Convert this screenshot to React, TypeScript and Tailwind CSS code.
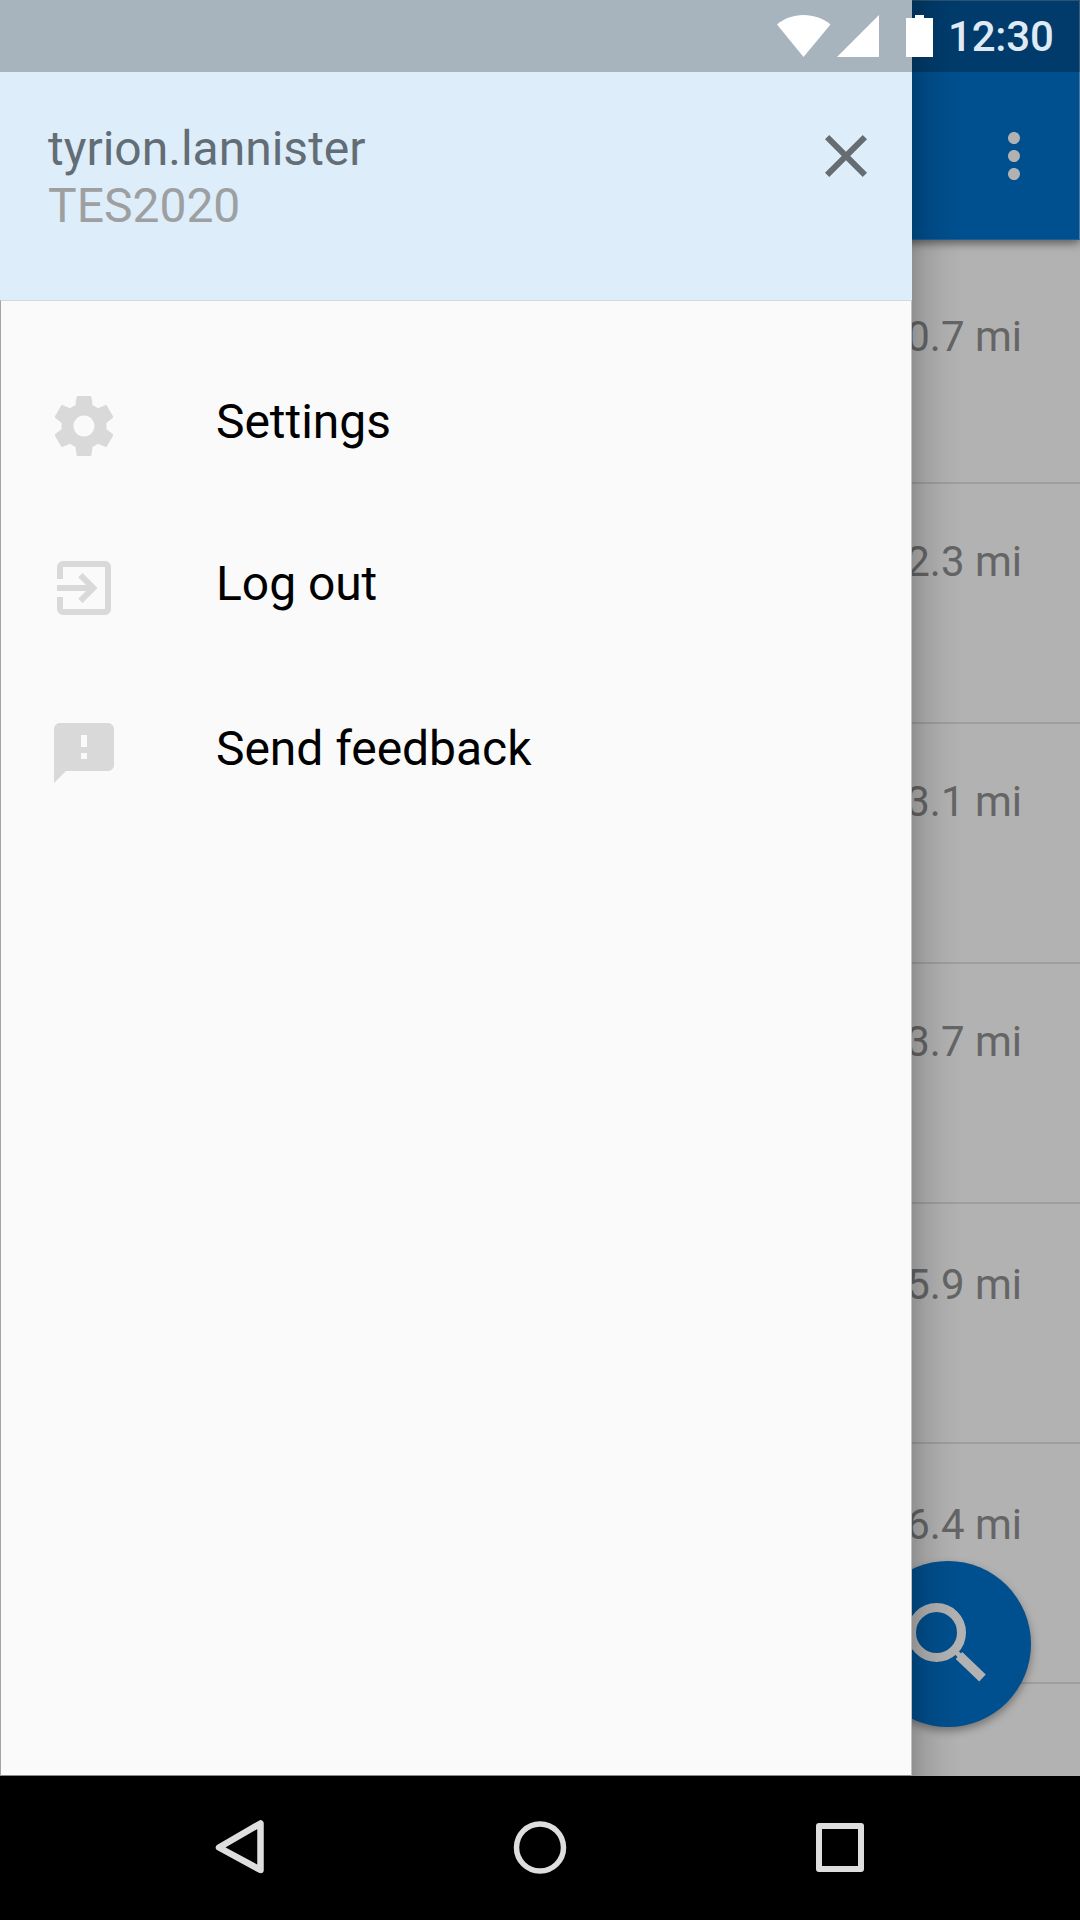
import type { ReactNode } from 'react';
import { MdClose, MdExitToApp, MdFeedback, MdMoreVert } from 'react-icons/md';

interface Place {
  distance: string;
  rowClass: string;
}

// Row heights include the 2px divider
const PLACES: Place[] = [
  { distance: '0.7 mi', rowClass: 'h-[244px] pt-[72px]' },
  { distance: '2.3 mi', rowClass: 'h-[240px] pt-[53px]' },
  { distance: '3.1 mi', rowClass: 'h-[240px] pt-[53px]' },
  { distance: '3.7 mi', rowClass: 'h-[240px] pt-[53px]' },
  { distance: '5.9 mi', rowClass: 'h-[240px] pt-[56px]' },
  { distance: '6.4 mi', rowClass: 'h-[240px] pt-[56px]' },
];

function SettingsIcon() {
  return (
    <svg viewBox="0 0 24 24" className="size-[72px]" fill="currentColor">
      <path d="M19.43 12.98c.04-.32.07-.64.07-.98s-.03-.66-.07-.98l2.11-1.65c.19-.15.24-.42.12-.64l-2-3.46c-.12-.22-.39-.3-.61-.22l-2.49 1c-.52-.4-1.08-.73-1.69-.98l-.38-2.65C14.46 2.18 14.25 2 14 2h-4c-.25 0-.46.18-.49.42l-.38 2.65c-.61.25-1.17.59-1.69.98l-2.49-1c-.23-.09-.49 0-.61.22l-2 3.46c-.13.22-.07.49.12.64l2.11 1.65c-.04.32-.07.65-.07.98s.03.66.07.98l-2.11 1.65c-.19.15-.24.42-.12.64l2 3.46c.12.22.39.3.61.22l2.49-1c.52.4 1.08.73 1.69.98l.38 2.65c.03.24.24.42.49.42h4c.25 0 .46-.18.49-.42l.38-2.65c.61-.25 1.17-.59 1.69-.98l2.49 1c.23.09.49 0 .61-.22l2-3.46c.12-.22.07-.49-.12-.64l-2.11-1.65zM12 15.5c-1.93 0-3.5-1.57-3.5-3.5s1.57-3.5 3.5-3.5 3.5 1.57 3.5 3.5-1.57 3.5-3.5 3.5z" />
    </svg>
  );
}

function StatusBar() {
  return (
    <div className="absolute inset-x-0 top-0 flex h-[72px] bg-black/[0.245] pt-[15px] pl-[777px]">
      <svg width="156" height="42" viewBox="0 0 156 42" fill="#fff" className="shrink-0">
        <path d="M26.5 42 0 9.5C7 3.5 16.5 0 26.5 0S46.5 3.5 53.5 9.5Z" />
        <path d="M60 42 102 0V42Z" />
        <path d="M138 0h9v3h9v39h-27V3h9Z" />
      </svg>
      <span className="mt-px ml-[15px] text-[42px] leading-[42px] font-medium tracking-[-0.2px] text-[#dfeaf5]">12:30</span>
    </div>
  );
}

function PlaceList() {
  return (
    <div className="flex grow flex-col">
      {PLACES.map((place) => (
        <div
          key={place.distance}
          className={`flex shrink-0 justify-end border-b-2 border-[#9e9e9e] pr-[58px] text-[42px] leading-[50px] text-[#656565] ${place.rowClass}`}
        >
          {place.distance}
        </div>
      ))}
    </div>
  );
}

function SearchButton() {
  return (
    <button
      type="button"
      className="absolute top-[1561px] left-[865px] size-[166px] rounded-full bg-[#004f8e] shadow-[0_4px_8px_rgba(0,0,0,0.35)]"
    >
      <svg viewBox="0 0 166 166" className="size-full" fill="none" stroke="#b2b2b2" strokeWidth="9">
        <circle cx="71.5" cy="71.5" r="25" />
        <path d="M90 90 96 96" strokeWidth="5" />
        <path d="M94 94.5 117.5 117" strokeWidth="9.5" />
      </svg>
    </button>
  );
}

function MenuItem({ icon, label, className }: { icon: ReactNode; label: string; className: string }) {
  return (
    <li className={`flex h-[72px] items-start gap-[96px] ${className}`}>
      <span className="text-[#d9d9d9]">{icon}</span>
      <span className="mt-[4px] text-[48px] leading-[56px] tracking-[-0.05px] text-black">{label}</span>
    </li>
  );
}

function Drawer() {
  return (
    <aside className="absolute top-0 left-0 flex h-[1776px] w-[912px] flex-col">
      <header className="flex h-[300px] shrink-0 justify-between bg-[#ddedfa] pt-[120px] pr-[30px] pl-[48px]">
        <div className="text-[48px] leading-[57px]">
          <div className="text-[#636d75]">tyrion.lannister</div>
          <div className="text-[#9d9fa1]">TES2020</div>
        </div>
        <MdClose className="size-[72px] text-[#656d73]" />
      </header>
      <ul className="grow border border-t-[#d3d9dd] border-r-[#c0c0c0] border-b-[#8a8a8a] border-l-[#a3a3a3] bg-[#fafafa] pt-[89px] pl-[47px]">
        <MenuItem icon={<SettingsIcon />} label="Settings" className="" />
        <MenuItem icon={<MdExitToApp className="size-[72px]" />} label="Log out" className="mt-[90px]" />
        <MenuItem icon={<MdFeedback className="size-[72px]" />} label="Send feedback" className="mt-[93px]" />
      </ul>
    </aside>
  );
}

function NavBar() {
  return (
    <nav className="flex h-[144px] shrink-0 items-center justify-center gap-[240px] bg-black">
      <svg width="60" height="60" viewBox="0 0 60 60" fill="none" stroke="#dedede" strokeWidth="6.5" strokeLinejoin="round">
        <path d="M9 29.5 50.5 5.5v46.5Z" />
      </svg>
      <svg width="60" height="60" viewBox="0 0 60 60" fill="none" stroke="#dedede" strokeWidth="5.5">
        <circle cx="30" cy="29.5" r="23.5" />
      </svg>
      <svg width="60" height="60" viewBox="0 0 60 60" fill="none" stroke="#dedede" strokeWidth="6" strokeLinejoin="round">
        <path d="M9 8h42v43H9Z" />
      </svg>
    </nav>
  );
}

export default function App() {
  return (
    <div className="relative flex h-[1920px] w-[1080px] flex-col overflow-hidden bg-[#b2b2b2] font-[Roboto,sans-serif]">
      <div className="flex h-[240px] shrink-0 justify-end border-t border-r border-b border-t-[#3d6d93] border-r-[#4d7ba0] border-b-[#1f5f94] bg-[#004f8e] pt-[119px] pr-[29px] shadow-[0_3px_9px_rgba(0,0,0,0.5)]">
        <MdMoreVert className="size-[72px] text-[#b2b2b2]" />
      </div>
      <PlaceList />
      <SearchButton />
      {/* Shadow cast by the drawer edge */}
      <div className="absolute top-0 left-[911px] h-[1776px] w-[50px] bg-[linear-gradient(to_right,rgba(0,0,0,0.2),rgba(0,0,0,0.1)_28%,rgba(0,0,0,0.04)_60%,transparent)]" />
      <Drawer />
      <StatusBar />
      <NavBar />
    </div>
  );
}
